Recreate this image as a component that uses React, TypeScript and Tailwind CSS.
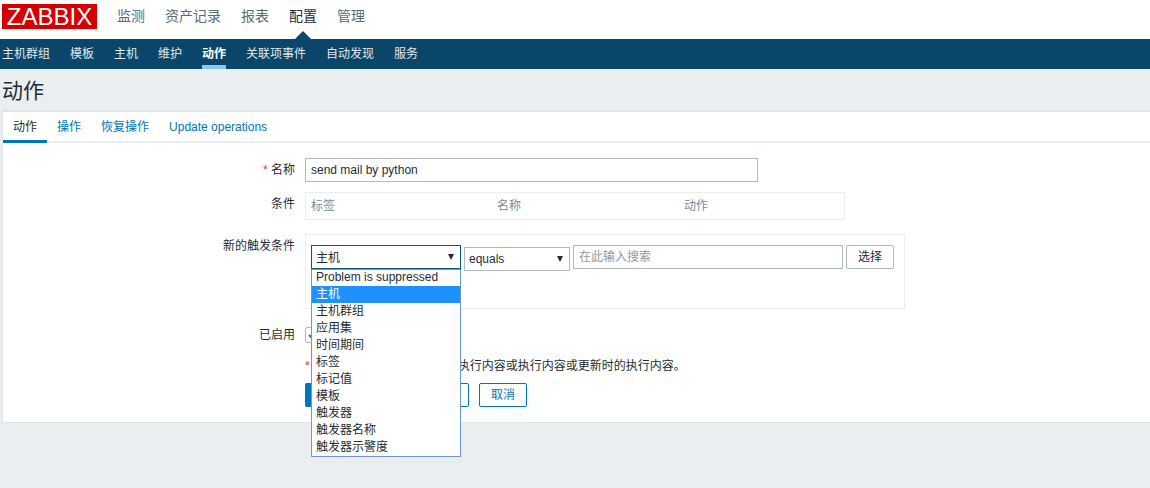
const mainNav = ["监测", "资产记录", "报表", "配置", "管理"];
const subNav = ["主机群组", "模板", "主机", "维护", "动作", "关联项事件", "自动发现", "服务"];
const tabs = ["动作", "操作", "恢复操作", "Update operations"];
const options = [
  "主机",
  "主机群组",
  "应用集",
  "时间期间",
  "标签",
  "标记值",
  "模板",
  "触发器",
  "触发器名称",
  "触发器示警度",
];

function Caret() {
  return (
    <svg width="6" height="6" viewBox="0 0 6 6" className="absolute right-[6px] top-[8px]">
      <path d="M0 0h6L3 6z" fill="#1f2c33" />
    </svg>
  );
}

function Label({ children, required }: { children: React.ReactNode; required?: boolean }) {
  return (
    <div className="w-[302px] shrink-0 pr-[10px] text-right text-[12px] leading-[14px] text-[#1f2c33]">
      {required && <span className="text-[#e33734]">* </span>}
      {children}
    </div>
  );
}

export default function App() {
  return (
    <div
      className="h-[488px] w-[1150px] overflow-hidden bg-[#ebeef0] text-[#1f2c33]"
      style={{ fontFamily: '"Liberation Sans", "Noto Sans CJK SC", sans-serif' }}
    >
      {/* Top nav */}
      <div className="flex h-[39px] items-start bg-white pl-[2px]">
        <div className="mt-[4px] flex h-[25px] w-[95px] items-center justify-center bg-[#d40000] text-[24px] leading-none text-white">
          ZABBIX
        </div>
        <div className="ml-[20px] flex gap-[20px] pt-[8px] text-[14px] leading-[16px] text-[#5a6a73]">
          {mainNav.map((item) => (
            <div key={item} className={item === "配置" ? "relative text-[#1f2c33]" : "relative"}>
              {item}
              {item === "配置" && (
                <svg width="18" height="9" viewBox="0 0 18 9" className="absolute left-[5px] top-[23px]">
                  <path d="M0 9L9 0l9 9z" fill="#0a466a" />
                </svg>
              )}
            </div>
          ))}
        </div>
      </div>

      {/* Sub nav */}
      <div className="flex h-[30px] gap-[20px] bg-[#0a466a] pl-[2px] text-[12px] text-[#e3e8eb]">
        {subNav.map((item) => (
          <div
            key={item}
            className={
              item === "动作"
                ? "h-[30px] border-b-[4px] border-[#84c9f5] pt-[8px] leading-[14px] font-bold text-white"
                : "pt-[8px] leading-[14px]"
            }
          >
            {item}
          </div>
        ))}
      </div>

      <div className="h-[41px] pl-[2px] pt-[10px] text-[21px] leading-[24px] text-[#1f2c33]">动作</div>

      {/* Panel */}
      <div className="ml-[2px] h-[313px] border-t-[2px] border-b-[1px] border-l-[1px] border-[#dfe4e7] bg-white">
        <div className="flex h-[31px] border-b-[2px] border-[#ebeef0] text-[12px]">
          {tabs.map((tab, i) => (
            <div
              key={tab}
              className={
                i === 0
                  ? "h-[31px] border-b-[3px] border-[#0275b8] px-[10px] pt-[8px] leading-[14px] text-[#1f2c33]"
                  : "px-[10px] pt-[8px] leading-[14px] text-[#0275b8]"
              }
            >
              {tab}
            </div>
          ))}
        </div>

        <div className="pt-[15px]">
          {/* Name */}
          <div className="flex items-start">
            <div className="pt-[5px]">
              <Label required>名称</Label>
            </div>
            <div className="h-[24px] w-[453px] border border-[#acbbc4] px-[5px] text-[12px] leading-[22px]">
              send mail by python
            </div>
          </div>

          {/* Conditions */}
          <div className="mt-[10px] flex items-start">
            <div className="pt-[5px]">
              <Label>条件</Label>
            </div>
            <div className="grid h-[28px] w-[540px] grid-cols-[186px_187px_1fr] border border-[#ebeef0] pl-[5px] pt-[6px] text-[12px] leading-[14px] text-[#768d99]">
              <div>标签</div>
              <div>名称</div>
              <div>动作</div>
            </div>
          </div>

          {/* New condition */}
          <div className="mt-[14px] flex items-start">
            <div className="pt-[5px]">
              <Label>新的触发条件</Label>
            </div>
            <div className="flex h-[75px] w-[600px] items-start border border-[#ebeef0] pl-[5px] pt-[10px] text-[12px]">
              <div className="relative h-[24px] w-[150px] border border-[#0a5a80] px-[4px] leading-[25px]">
                主机
                <Caret />
                <div className="absolute left-[-1px] top-[23px] z-10 w-[150px] border border-[#7096d8] bg-white">
                  <div className="h-[16px] px-[4px] leading-[15px] text-[#1f2c33]">Problem is suppressed</div>
                  {options.map((opt) => (
                    <div
                      key={opt}
                      className={
                        opt === "主机"
                          ? "h-[17px] bg-[#1e90ff] px-[4px] leading-[17px] text-white"
                          : "h-[17px] px-[4px] leading-[17px] text-[#1f2c33]"
                      }
                    >
                      {opt}
                    </div>
                  ))}
                </div>
              </div>
              <div className="relative ml-[3px] mt-[2px] h-[24px] w-[106px] border border-[#acbbc4] px-[4px] leading-[22px]">
                equals
                <Caret />
              </div>
              <div className="ml-[3px] h-[24px] w-[270px] border border-[#acbbc4] px-[5px] leading-[22px] text-[#8a9ba5]">
                在此输入搜索
              </div>
              <div className="ml-[3px] h-[24px] w-[48px] rounded-[2px] border border-[#acbbc4] text-center leading-[22px]">
                选择
              </div>
            </div>
          </div>

          {/* Enabled */}
          <div className="mt-[18px] flex items-center">
            <Label>已启用</Label>
            <div className="flex h-[16px] w-[16px] items-center justify-center rounded-[2px] border border-[#acbbc4]">
              <svg width="10" height="10" viewBox="0 0 10 10">
                <path d="M1 5l3 3 5-6" fill="none" stroke="#0275b8" strokeWidth="2" />
              </svg>
            </div>
          </div>

          {/* Note */}
          <div className="mt-[16px] flex text-[12px] leading-[14px]">
            <div className="w-[302px] shrink-0" />
            <span className="text-[#e33734]">*</span>
            <span className="ml-[4px]">必须至少为此动作设置一个执行内容或执行内容或更新时的执行内容。</span>
          </div>

          {/* Buttons */}
          <div className="mt-[10px] flex text-[12px]">
            <div className="w-[302px] shrink-0" />
            <div className="h-[24px] w-[48px] rounded-[2px] bg-[#0275b8]" />
            <div className="ml-[10px] h-[24px] w-[106px] rounded-[2px] border border-[#0275b8]" />
            <div className="ml-[10px] h-[24px] w-[48px] rounded-[2px] border border-[#0275b8] text-center leading-[22px] text-[#0275b8]">
              取消
            </div>
          </div>
        </div>
      </div>
    </div>
  );
}
